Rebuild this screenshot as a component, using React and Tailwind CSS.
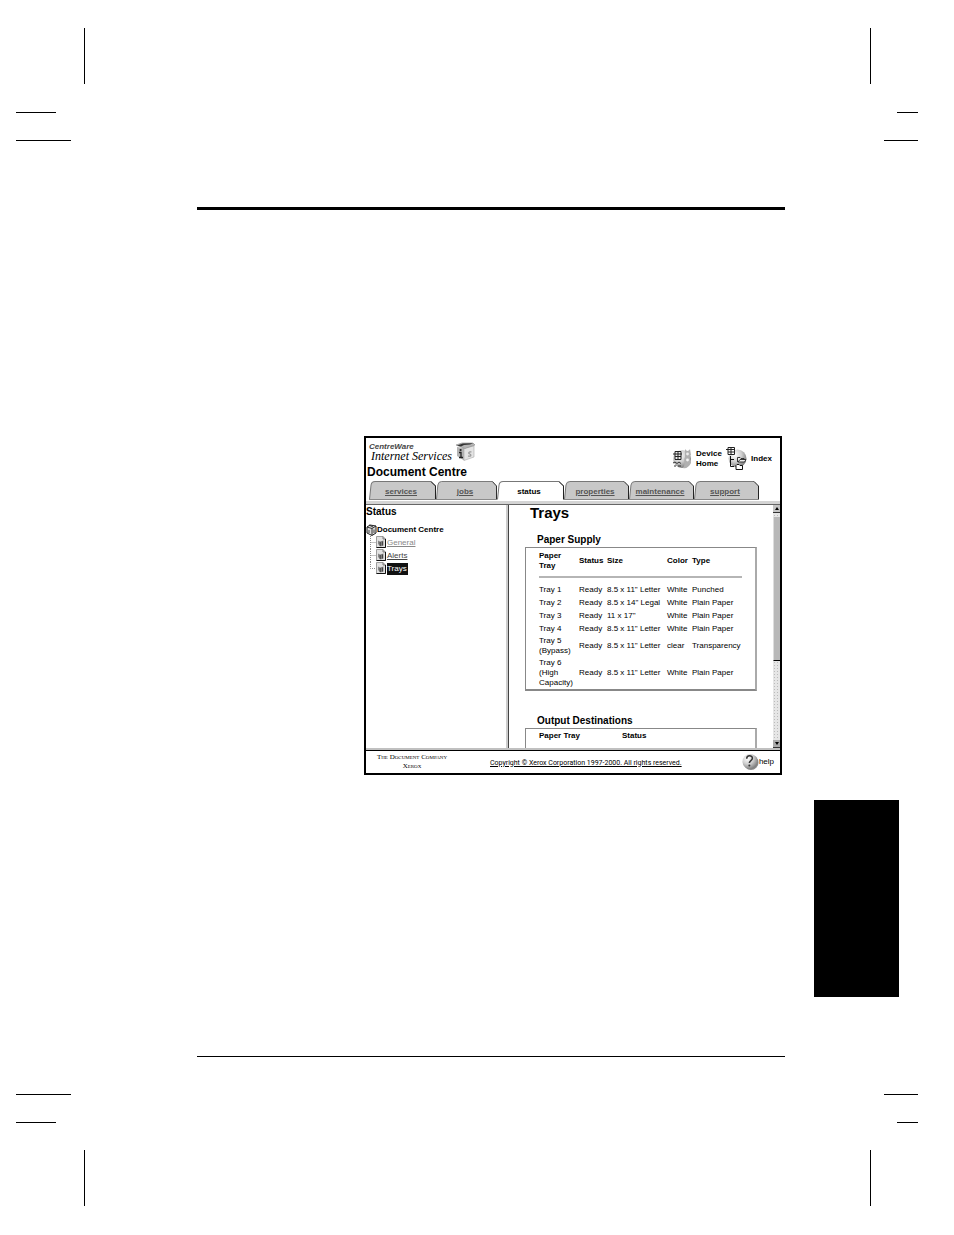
import React from 'react';
import clsx from 'clsx';

const tabs = [
  { label: 'services', width: 'w-[67px]' },
  { label: 'jobs', width: 'w-[61px]' },
  { label: 'status', width: 'w-[67px]', active: true },
  { label: 'properties', width: 'w-[65px]' },
  { label: 'maintenance', width: 'w-[65px]' },
  { label: 'support', width: 'w-[65px]' },
];

const supply = [
  { tray: 'Tray 1', status: 'Ready', size: '8.5 x 11" Letter', color: 'White', type: 'Punched' },
  { tray: 'Tray 2', status: 'Ready', size: '8.5 x 14" Legal', color: 'White', type: 'Plain Paper' },
  { tray: 'Tray 3', status: 'Ready', size: '11 x 17"', color: 'White', type: 'Plain Paper' },
  { tray: 'Tray 4', status: 'Ready', size: '8.5 x 11" Letter', color: 'White', type: 'Plain Paper' },
  { tray: 'Tray 5 (Bypass)', status: 'Ready', size: '8.5 x 11" Letter', color: 'clear', type: 'Transparency' },
  { tray: 'Tray 6 (High Capacity)', status: 'Ready', size: '8.5 x 11" Letter', color: 'White', type: 'Plain Paper' },
];

const CubeLogo = () => (
  <svg className="ml-1" width="20" height="19" viewBox="0 0 20 19" aria-hidden="true">
    <path d="M1 5 L8 6 L8 18.5 L1 14 Z" fill="#b4b4b4" />
    <path d="M8 6 L18 4 L18 15 L8 18.5 Z" fill="#e4e4e4" stroke="#aaa" strokeWidth="0.6" />
    <path d="M0 3 L6 1 L17 1 L19 3 L9 6.5 Z" fill="#b5b5b5" stroke="#888" strokeWidth="0.6" />
    <path d="M1 3.5 L7 1.5 L17 1.2 L14 2.5 L8 3 L5 4.5 Z" fill="#333" />
    <circle cx="4.6" cy="8" r="1.1" fill="#222" />
    <path d="M3 10.5 H5 V15.5 M3 15.5 H7" stroke="#222" strokeWidth="1.3" fill="none" />
    <path d="M15.5 10 C12.5 9.4 12 11.4 13.8 12 C15.8 12.7 15 14.8 12 14" stroke="#999" strokeWidth="1.2" fill="none" />
  </svg>
);

const Sphere = ({ id }) => (
  <radialGradient id={id} cx="0.35" cy="0.3" r="0.75">
    <stop offset="0" stopColor="#ffffff" />
    <stop offset="0.5" stopColor="#cfcfcf" />
    <stop offset="1" stopColor="#777777" />
  </radialGradient>
);

const DeviceIcon = () => (
  <svg width="20" height="22" viewBox="0 0 20 22" aria-hidden="true">
    <defs><Sphere id="device" /></defs>
    <circle cx="10" cy="11" r="9" fill="url(#device)" />
    <path d="M13 1 C15 4 17 3 18 1 L19 7 C16 9 19 12 19 15 C17 19 14 21 11 20 C14 16 11 12 13 9 Z" fill="#b0b0b0" />
    <circle cx="15.5" cy="6" r="1.4" fill="#eee" />
    <circle cx="15.5" cy="12" r="1.4" fill="#f4f4f4" />
    <path d="M3 3.5 H9 V11.5 H3 Z" fill="#eee" />
    <path d="M3 3.5 H9 V11.5 H3 Z M1 6 H10 M3 8.5 H9 M6 3 V12" fill="none" stroke="#222" strokeWidth="1" />
    <path d="M1 15 L3 14 L5 15.5 L7 14 L9 15.5 M2 18 H4 M6 18 H9" fill="none" stroke="#333" strokeWidth="1" />
  </svg>
);

const IndexIcon = () => (
  <svg width="22" height="26" viewBox="0 0 22 26" aria-hidden="true">
    <defs><Sphere id="index" /></defs>
    <circle cx="11.5" cy="12.5" r="9" fill="url(#index)" />
    <path d="M2 1.5 H8.5 V8.5 H2 Z M0 3.5 H9 M2 6 H9 M5 1 V9" fill="#fff" stroke="#222" strokeWidth="1" />
    <path d="M4.5 10 V20.5 H8 M4.5 13.5 H8" fill="none" stroke="#111" strokeWidth="1" />
    <path d="M11.5 16 V11.5 H14 L15 12.5 H18 V14 M12 16 L14 13.5 H20 L18.5 16 Z" fill="#eee" stroke="#222" strokeWidth="0.9" />
    <path d="M10 23.5 V19.5 L11 18.5 H13 L14 19.5 H16.5 V23.5 Z" fill="#fff" stroke="#111" strokeWidth="1" />
  </svg>
);

const HelpIcon = () => (
  <svg width="17" height="18" viewBox="0 0 18 19" aria-hidden="true">
    <defs><Sphere id="help" /></defs>
    <circle cx="9.5" cy="10" r="8" fill="#8a8a8a" />
    <circle cx="8.5" cy="9" r="8" fill="url(#help)" />
    <path d="M5 6 C5 2 11 2 11 5.5 C11 8 7.8 8 7.8 10.5" fill="none" stroke="#333" strokeWidth="1.6" />
    <circle cx="7.8" cy="13.2" r="1.1" fill="#333" />
  </svg>
);

const RootIcon = () => (
  <svg width="11" height="12" viewBox="0 0 11 12" aria-hidden="true">
    <path d="M1 3 L4 1 L10 2 V9 L6 11.5 L1 9 Z" fill="#ddd" stroke="#222" strokeWidth="1" />
    <path d="M1 3 L6 4.5 L10 2 M6 4.5 V11 M3 1 L7 3" fill="none" stroke="#222" strokeWidth="0.9" />
    <path d="M3 6 V9 M8 5.5 V9" stroke="#444" strokeWidth="1" />
  </svg>
);

const PageIcon = () => (
  <svg className="shrink-0" width="11" height="13" viewBox="0 0 11 13" aria-hidden="true">
    <path d="M0.5 0.5 H7 L9.5 3 V11.5 H0.5 Z" fill="#e2e2e2" stroke="#888" strokeWidth="0.8" />
    <path d="M7 0.5 V3 H9.5" fill="none" stroke="#666" strokeWidth="0.8" />
    <path d="M9.5 3 V11.5 H0.5" fill="none" stroke="#111" strokeWidth="1" />
    <path d="M2 4.5 L4 5.5 L7.5 4.5 V9.5 L4.5 10.5 L2 8 Z" fill="#888" />
    <path d="M4.2 6 V10 M6.4 5.5 V9.5" stroke="#333" strokeWidth="0.9" />
  </svg>
);

const Branch = ({ last }) => (
  <svg className="shrink-0" width="6" height="13" viewBox="0 0 6 13" aria-hidden="true">
    <path d={last ? 'M0.5 0 V6.5 H6' : 'M0.5 0 V13 M0.5 6.5 H6'} fill="none" stroke="#888" strokeDasharray="1 1" />
  </svg>
);

const Tab = ({ label, width, active }) => (
  <a
    href={'#' + label}
    className={clsx(
      'relative flex h-[19px] items-center justify-center pt-[3px] pr-[3px] text-[8px] leading-[10px] font-bold',
      width,
      active ? 'text-black' : 'text-[#555] underline'
    )}
  >
    <svg className="absolute inset-0 h-full w-full" viewBox="0 0 66 19" preserveAspectRatio="none" aria-hidden="true">
      <path d="M0.5 18.5 L2 4 Q2.5 0.5 6 0.5 H61 L65.5 5 V18.5 Z" fill={active ? '#fff' : '#c8c8c8'} />
      <path d="M0.5 18.5 L2 4 Q2.5 0.5 6 0.5 H61" fill="none" stroke="#777" />
      <path d="M61 0.5 L65.5 5 V18.5" fill="none" stroke="#222" />
      {!active && <path d="M0 18.5 H66" stroke="#888" />}
    </svg>
    <span className="relative">{label}</span>
  </a>
);

const CropRow = ({ long }) => (
  <div className="flex h-7 justify-between pl-4 pr-9">
    <div className={clsx('border-t border-black', long ? 'w-[55px]' : 'w-10')} />
    <div className={clsx('border-t border-black', long ? 'w-[34px]' : 'w-[21px]')} />
  </div>
);

const CropPosts = () => (
  <div className="flex h-14 justify-between pl-[84px] pr-[83px]">
    <div className="w-px bg-black" />
    <div className="w-px bg-black" />
  </div>
);

const Header = () => (
  <header className="flex h-[43px] justify-between pl-px pr-2">
    <div>
      <div className="flex h-[27px] pl-[2px] pt-1">
        <div>
          <p className="text-[8px] leading-[9px] font-bold italic text-[#444]">CentreWare</p>
          <p className="pl-[2px] font-['Liberation_Serif',serif] text-[12px] leading-[11px] italic">Internet Services</p>
        </div>
        <CubeLogo />
      </div>
      <h1 className="text-[12px] leading-[14px] font-bold">Document Centre</h1>
    </div>
    <nav className="flex h-[34px] items-end text-[8px] leading-[10px] font-bold">
      <a href="#home" className="flex h-[26px] items-center gap-1">
        <DeviceIcon />
        <span className="w-[30px]">Device Home</span>
      </a>
      <a href="#index" className="flex h-[26px] items-center gap-[3px]">
        <IndexIcon />
        <span>Index</span>
      </a>
    </nav>
  </header>
);

const TreePane = () => (
  <aside className="w-[140px] shrink-0 bg-white">
    <h2 className="pt-px text-[10px] leading-3 font-bold">Status</h2>
    <div className="mt-[6px] flex h-3 items-center text-[8px] font-bold">
      <RootIcon />
      <span>Document Centre</span>
    </div>
    <ul className="pl-1 text-[8px] leading-[10px]">
      <li className="flex h-[13px] items-center">
        <Branch />
        <PageIcon />
        <a href="#general" className="text-[#888] underline">General</a>
      </li>
      <li className="flex h-[13px] items-center">
        <Branch />
        <PageIcon />
        <a href="#alerts" className="text-[#444] underline">Alerts</a>
      </li>
      <li className="flex h-[13px] items-center">
        <Branch last />
        <PageIcon />
        <a href="#trays" className="bg-[#111] py-px pr-px text-white">Trays</a>
      </li>
    </ul>
  </aside>
);

const ScrollBar = () => (
  <div className="flex w-[7px] shrink-0 flex-col bg-[#e6e6e6] bg-[radial-gradient(#bbb_1px,transparent_1px)] bg-[size:3px_3px]">
    <button aria-label="Scroll up" className="flex h-2 items-center justify-center border-b border-[#333] bg-[#c4c4c4]">
      <svg width="4" height="3" viewBox="0 0 4 3"><path d="M0 3 L2 0 L4 3 Z" /></svg>
    </button>
    <div className="mt-1 h-36 border-b border-l border-b-black border-l-[#ddd] bg-[#b8b8b8]" />
    <button aria-label="Scroll down" className="mt-auto flex h-2 items-center justify-center border-b border-[#333] bg-[#aaa]">
      <svg width="4" height="3" viewBox="0 0 4 3"><path d="M0 0 L2 3 L4 0 Z" /></svg>
    </button>
  </div>
);

const TraysPane = () => (
  <main className="min-w-0 flex-1 overflow-hidden bg-white px-4">
    <h2 className="pl-[5px] text-[15px] leading-4 font-bold">Trays</h2>
    <h3 className="mt-[13px] pl-3 text-[10px] leading-3 font-bold">Paper Supply</h3>
    <div className="mt-px border-b-2 border-r-2 border-l border-t border-b-[#888] border-r-[#aaa] border-l-[#888] border-t-[#888] px-[13px] pt-[2px]">
      <table className="w-full table-fixed text-left text-[8px] leading-[10px]">
        <colgroup>
          <col className="w-10" />
          <col className="w-7" />
          <col className="w-[60px]" />
          <col className="w-[25px]" />
          <col />
        </colgroup>
        <thead>
          <tr className="h-[22px] font-bold">
            <th className="pr-2">Paper Tray</th>
            <th>Status</th>
            <th>Size</th>
            <th>Color</th>
            <th>Type</th>
          </tr>
          <tr>
            <td colSpan={5} className="pt-1 pb-[5px]">
              <hr className="border-t-2 border-[#b5b5b5]" />
            </td>
          </tr>
        </thead>
        <tbody>
          {supply.map((row) => (
            <tr key={row.tray} className="h-[13px]">
              <td className="py-px">{row.tray}</td>
              <td className="py-px whitespace-nowrap">{row.status}</td>
              <td className="py-px whitespace-nowrap">{row.size}</td>
              <td className="py-px whitespace-nowrap">{row.color}</td>
              <td className="py-px whitespace-nowrap">{row.type}</td>
            </tr>
          ))}
        </tbody>
      </table>
    </div>
    <h3 className="mt-6 pl-3 text-[10px] leading-3 font-bold">Output Destinations</h3>
    <div className="mt-px border-r-2 border-l border-t border-r-[#aaa] border-l-[#888] border-t-[#888] pl-[13px] pt-[2px] pb-8">
      <table className="w-full table-fixed text-left text-[8px] leading-[10px]">
        <thead>
          <tr>
            <th className="w-[83px]">Paper Tray</th>
            <th>Status</th>
          </tr>
        </thead>
      </table>
    </div>
  </main>
);

const Footer = () => (
  <footer className="flex h-[23px] items-center border-t border-black pl-2 pr-[6px] text-[8px]">
    <p className="w-[76px] text-center font-['Liberation_Serif',serif] text-[7px] leading-[9px] whitespace-nowrap [font-variant:small-caps]">
      The Document Company
      <br />
      Xerox
    </p>
    <a href="#copyright" className="ml-10 pt-[2px] font-[Roboto,sans-serif] text-[7px] leading-[9px] underline">
      Copyright © Xerox Corporation 1997-2000. All rights reserved.
    </a>
    <a href="#help" className="ml-auto flex items-center">
      <HelpIcon />
      <span>help</span>
    </a>
  </footer>
);

const App = () => {
  return (
    <div className="bg-white py-7 font-['Liberation_Sans',Arial,sans-serif] text-black">
      <CropPosts />
      <div className="h-7" />
      <CropRow />
      <CropRow long />

      <div className="flex pl-[197px] pr-[55px]">
        <section className="min-w-0 flex-1 pb-[37px]">
          <div className="mt-[39px] h-[3px] bg-black" />

          <div className="mt-[226px] ml-[167px] mr-[3px] border-2 border-black">
            <Header />
            <nav className="flex h-5 pl-[3px]">
              {tabs.map((tab) => <Tab key={tab.label} {...tab} />)}
            </nav>
            <div className="h-1 border-b border-[#666] bg-[#d4d4d4]" />
            <div className="flex h-[243px]">
              <TreePane />
              <div className="w-[3px] shrink-0 border-r border-[#444] bg-[#ccc]" />
              <TraysPane />
              <ScrollBar />
            </div>
            <div className="h-[2px] bg-[#c0c0c0]" />
            <Footer />
          </div>

          <div className="mt-[281px] h-px bg-black" />
        </section>

        <div className="mt-[632px] ml-[29px] h-[197px] w-[85px] bg-black" />
      </div>

      <CropRow long />
      <CropRow />
      <CropPosts />
    </div>
  );
};
export default App;
